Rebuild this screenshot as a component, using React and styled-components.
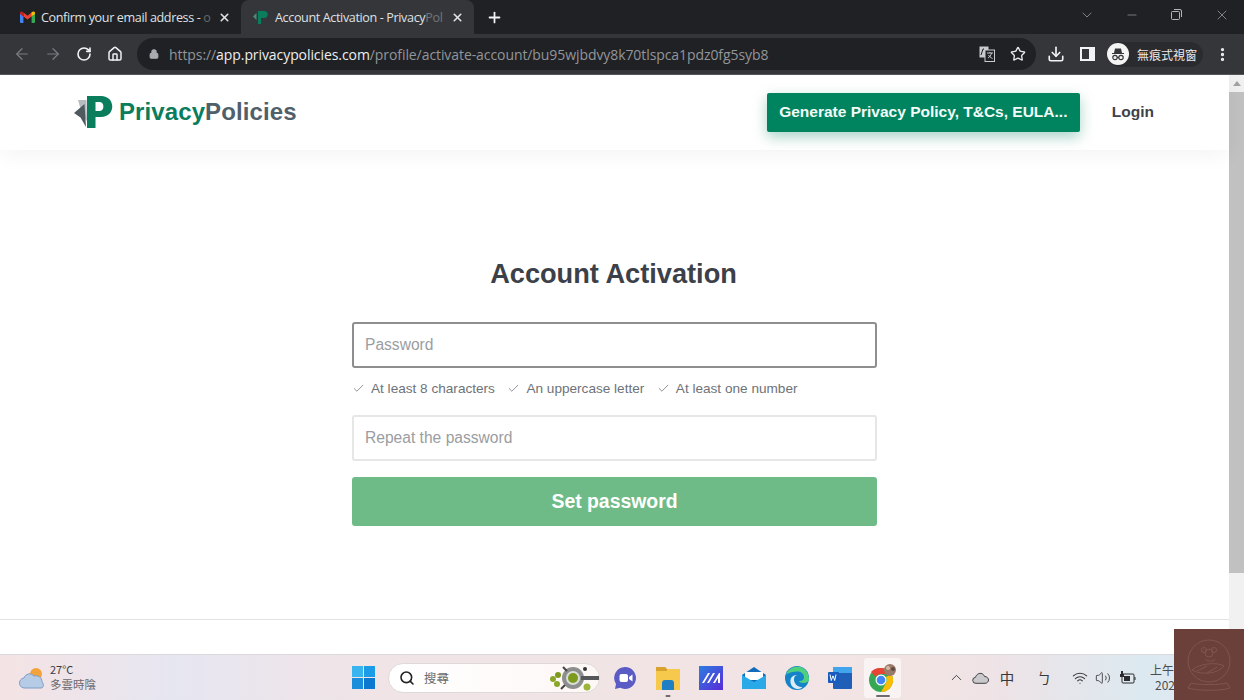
import React from "react";
import styled, { createGlobalStyle } from "styled-components";
import { ArrowLeft, ArrowRight, RotateCw, Home, Lock, Star, Download, ChevronDown, Minus, X, Plus, Check, Search, ChevronUp, Wifi, Volume2, EllipsisVertical } from "lucide-react";

const Global = createGlobalStyle`
  html, body { margin: 0; padding: 0; height: 700px; overflow: hidden; background: #fff; }
  * { box-sizing: border-box; }
  body { font-family: "Liberation Sans", Arial, sans-serif; }
`;
const Screen = styled.div`
  position: relative; width: 1244px; height: 700px; display: flex; flex-direction: column; overflow: hidden;
`;
const TabStrip = styled.div`
  height: 34px; background: #202124; display: flex; align-items: flex-end; padding-left: 8px; flex: none;
`;
const Tab = styled.div`
  width: 233px; height: 34px; display: flex; align-items: center; gap: 6px;
  padding: 0 10px 0 12px; border-radius: 8px 8px 0 0;
  background: ${p => p.$active ? "#35363a" : "transparent"}; color: #dfe1e4;
  font: 12.6px "Open Sans", "Noto Sans", sans-serif; letter-spacing: -0.38px;
`;
const TabTitle = styled.span`
  flex: 1; white-space: nowrap; color: #dfe1e4;
  i { font-style: normal; opacity: .35; }
`;
const NewTab = styled.div`
  width: 40px; height: 33px; display: flex; align-items: center; justify-content: center; color: #f1f3f4;
`;
const WindowControls = styled.div`
  margin-left: auto; height: 34px; display: flex; align-items: center; color: #b4b6b9;
`;
const WinBtn = styled.div`
  width: ${p => p.$w || 45}px; display: flex; justify-content: center; align-items: center; padding-bottom: 5px;
`;
const Toolbar = styled.div`
  height: 41px; flex: none; background: #35363a; display: flex; align-items: center; padding: 0 0 0 6px; border-bottom: 1px solid #55565a;
`;
const NavBtn = styled.div`
  width: 31px; display: flex; justify-content: center; color: ${p => p.$off ? "#7b7d81" : "#f1f3f4"};
`;
const Omnibox = styled.div`
  margin-left: 7px; width: 899px; height: 32px; border-radius: 16px; background: #202124; display: flex; align-items: center; padding: 0 3px 0 12px;
`;
const Url = styled.div`
  margin-left: 10px; flex: 1; font: 14px "Open Sans", "Noto Sans", sans-serif; color: #92959a; white-space: nowrap; letter-spacing: -0.08px;
  b { font-weight: 400; color: #eceef0; }
`;
const OmniIcon = styled.div`
  width: 31px; display: flex; justify-content: center; color: #e8eaed;
`;
const ToolIcon = styled.div`
  width: ${p => p.$w || 31}px; display: flex; justify-content: center; color: #f1f3f4;
`;
const Incognito = styled.div`
  margin-left: 9px; width: 96px; height: 25px; border-radius: 13px; background: #2a2b2e; display: flex; align-items: center; gap: 8px;
  color: #e8eaed; font: 12px "Noto Sans CJK TC", sans-serif; white-space: nowrap;
`;
const Page = styled.div`
  position: relative; height: 579px; flex: none; display: flex; background: #fff; overflow: hidden;
`;
const PageBody = styled.div`
  flex: 1; min-width: 0; display: flex; flex-direction: column;
`;
const Scrollbar = styled.div`
  width: 15px; flex: none; background: #f1f1f1; display: flex; flex-direction: column; align-items: center;
`;
const ScrollArrow = styled.div`
  height: 17px; display: flex; align-items: center; justify-content: center;
  &::before { content: ""; border-left: 4px solid transparent; border-right: 4px solid transparent; border-bottom: 5px solid #a3a3a3; }
`;
const ScrollThumb = styled.div`
  width: 15px; height: 481px; background: #c1c1c1;
`;
const SiteHeader = styled.header`
  height: 75px; flex: none; background: #fff; display: flex; align-items: center; padding: 0 75px 0 74px;
  box-shadow: 0 4px 22px rgba(0,0,0,.05); position: relative;
`;
const Brand = styled.div`
  display: flex; align-items: center; gap: 6px; font: 700 24px "Liberation Sans", sans-serif; color: #0a7d5d; letter-spacing: .1px;
`;
const BrandName = styled.div`
  padding-bottom: 2px;
  span { color: #50606a; }
`;
const Cta = styled.div`
  margin-left: auto; width: 313px; height: 39px; padding-bottom: 1px; background: #00845f; color: #f3fbf8; border-radius: 2px;
  display: flex; align-items: center; justify-content: center; font: 700 15.5px "Liberation Sans", sans-serif; white-space: nowrap;
  box-shadow: 0 5px 14px rgba(0,132,95,.35);
`;
const LoginLink = styled.div`
  margin-left: 32px; padding-bottom: 2px; font: 700 15.5px "Liberation Sans", sans-serif; color: #3f4249;
`;
const Main = styled.main`
  flex: 1; display: flex; flex-direction: column; align-items: center; padding: 107px 0 0 0; border-bottom: 1px solid #e3e3e3;
  margin-bottom: 34px;
`;
const Title = styled.h1`
  margin: 0; font: 700 27.2px/33px "Liberation Sans", sans-serif; color: #3c4049; transform: translateX(-1px);
`;
const Form = styled.div`
  margin-top: 32px; width: 525px; display: flex; flex-direction: column;
`;
const Field = styled.div`
  height: 46px; border: 2px solid ${p => p.$focus ? "#8e8e8e" : "#e6e6e6"}; border-radius: 3px; background: #fff;
  display: flex; align-items: center; padding-left: 11px; color: #9a9da1; font: 15.6px "Liberation Sans", sans-serif;
`;
const Hints = styled.div`
  height: 47px; display: flex; align-items: center; gap: 12.5px; padding-bottom: 7px;
`;
const Hint = styled.div`
  display: flex; align-items: center; gap: 6px; color: #6e7278; font: 13.6px "Liberation Sans", sans-serif; white-space: nowrap;
`;
const Submit = styled.div`
  margin-top: 16px; height: 49px; background: #6fbb87; border-radius: 3px; color: #fff;
  display: flex; align-items: center; justify-content: center; font: 700 19.4px "Liberation Sans", sans-serif;
`;
const Taskbar = styled.div`
  height: 46px; flex: none; display: flex; align-items: center; border-top: 1px solid #dcd9dc;
  background: linear-gradient(90deg, #f4e3e4 0%, #e6e6f1 14%, #f0e4e6 30%, #f3e4e4 74%, #eee3e6 80%, #dce9f0 92%, #e4e6f0 100%);
`;
const Weather = styled.div`
  width: 352px; flex: none; display: flex; align-items: center; gap: 5px; padding-left: 19px;
`;
const WeatherText = styled.div`
  display: flex; flex-direction: column; padding-bottom: 2px; font: 11px/15px "Noto Sans CJK TC", sans-serif; color: #3b3b3d;
  small { font-size: 11.5px; color: #6a6a70; }
`;
const SearchBox = styled.div`
  width: 212px; height: 30px; margin-left: 13px; flex: none; border-radius: 15px; background: linear-gradient(90deg,#fff 0%,#fdf7f5 100%);
  border: 1px solid #dedadb; display: flex; align-items: center; padding-left: 10px; gap: 9px;
  color: #6b6b6b; font: 12.5px "Noto Sans CJK TC", sans-serif; position: relative;
`;
const SearchArtSvg = styled.svg`
  position: absolute; right: -2px; top: -1px;
`;
const Dock = styled.div`
  display: flex; align-items: center; margin-left: 3px;
`;
const DockItem = styled.div`
  width: 43px; height: 40px; display: flex; justify-content: center; align-items: center; position: relative;
  &::before { content: ""; display: ${p => p.$on ? "block" : "none"}; position: absolute; inset: 0 3px; background: rgba(255,255,255,.55); border-radius: 3px; }
  > svg { position: relative; }
  &::after { content: ""; display: ${p => p.$dot ? "block" : "none"}; position: absolute; bottom: 1px; left: 50%; transform: translateX(-50%);
    width: ${p => p.$on ? 14 : 5}px; height: 2px; border-radius: 1px; background: #6f6b6c; }
`;
const Tray = styled.div`
  margin-left: 40px; display: flex; align-items: center; color: #38383a; font: 14.5px "Noto Sans CJK TC", sans-serif; flex: none;
`;
const TrayItem = styled.div`
  width: ${p => p.$w || 24}px; display: flex; justify-content: center;
`;
const Clock = styled.div`
  margin-left: 8px; padding-bottom: 1px; font: 12px/15px "Noto Sans CJK TC", sans-serif; color: #4c4c50; white-space: nowrap;
  span { display: block; padding-left: 5px; }
`;
const Watermark = styled.div`
  position: absolute; right: 0; top: 629px; width: 70px; height: 71px; background: #6b3f3a; display: flex; align-items: center; justify-content: center;
`;

const Gmail = () => (
  <svg width="15" height="12" viewBox="0 0 15 12"><path d="M0 2v9a1 1 0 0 0 1 1h2.4V5.4z" fill="#4285f4"/><path d="M15 2v9a1 1 0 0 1-1 1h-2.4V5.4z" fill="#34a853"/><path d="M3.4 5.4 7.5 8.5l4.1-3.1V1.6L7.5 4.7 3.4 1.6z" fill="#ea4335"/><path d="M0 2c0-1.6 1.9-2.4 3.4-.4v3.8L0 3z" fill="#c5221f"/><path d="M15 2c0-1.6-1.9-2.4-3.6-.4v3.8L15 3z" fill="#fbbc04"/></svg>
);
const MiniP = () => (
  <svg width="16" height="15" viewBox="0 0 16 15"><path d="M5 1h6c5 0 5 7 0 7H8v6H5z" fill="#0a7d5d"/><path d="M3.5 3 0 6.5 3.5 10z" fill="#4d8a78"/></svg>
);
const Logo = () => (
  <svg width="39" height="33" viewBox="0 0 39 33">
    <path d="M4 4h8.500l.5 21-4.500-5z" fill="#b6bcc0"/>
    <path d="M0 17 10.500 8l1.500 23-5.500-9.500z" fill="#4f5a60"/>
    <path fillRule="evenodd" d="M13 0h14c15 0 15 21 0 21h-5.500v11H13zM21.500 6v9H26c4.500 0 4.500-9 0-9z" fill="#0a7d5d"/>
  </svg>
);
const Translate = () => (
  <svg width="16" height="16" viewBox="0 0 16 16"><rect x="0.500" y="0.500" width="9" height="11" fill="#c8cacc"/><rect x="6" y="4" width="9.500" height="11.500" fill="#202124" stroke="#c8cacc"/><path d="M8 7h6M11 6v1M9 12c2-1 3-3 3.500-5M9.500 9c1 1.500 2 2.500 4 3.500" stroke="#c8cacc" fill="none"/><path d="M2 9l2-6h1" stroke="#202124" fill="none"/></svg>
);
const SidePanel = () => (
  <svg width="15" height="14" viewBox="0 0 15 14"><path fillRule="evenodd" d="M0 0h15v14H0zM2 2v10h7V2z" fill="#f1f3f4"/></svg>
);
const IncognitoIcon = () => (
  <svg width="22" height="22" viewBox="0 0 22 22"><circle cx="11" cy="11" r="11" fill="#f4f4f4"/><path d="M5 10h12v1H5zM7 10l1-4.500h6l1 4.500z" fill="#35363a"/><circle cx="8" cy="14.500" r="2.200" fill="none" stroke="#35363a" strokeWidth="1.200"/><circle cx="14" cy="14.500" r="2.200" fill="none" stroke="#35363a" strokeWidth="1.200"/><path d="M10 14.500h2" stroke="#35363a"/></svg>
);
const WeatherIcon = () => (
  <svg width="26" height="22" viewBox="0 0 26 22"><circle cx="17" cy="7" r="6" fill="#f2a33c"/><path d="M6 21a5 5 0 0 1-1-10c1-4 7-6 10-2 4-1 8 1 8 6 2 1 2 6-1 6z" fill="#b6cbe6" stroke="#7d9cc4"/></svg>
);
const WinLogo = () => (
  <svg width="23" height="23" viewBox="0 0 23 23"><rect width="11" height="11" fill="#38b5ee"/><rect x="12" width="11" height="11" fill="#1c9be6"/><rect y="12" width="11" height="11" fill="#1a8ddb"/><rect x="12" y="12" width="11" height="11" fill="#0d78cf"/></svg>
);
const SearchArt = () => (
  <SearchArtSvg width="52" height="30" viewBox="0 0 52 30">
    <circle cx="24" cy="15" r="11" fill="#8d8f8f"/><circle cx="24" cy="15" r="7" fill="#dcdcd8"/><circle cx="24" cy="15" r="5" fill="#7c9a1e"/>
    <path d="M32 13h18v4H32z" fill="#55575a"/><circle cx="4" cy="16" r="3" fill="#8aa52a"/><circle cx="9" cy="12" r="3" fill="#7c9a1e"/><circle cx="8" cy="21" r="3" fill="#8aa52a"/><circle cx="38" cy="24" r="3.500" fill="#9bb53a"/><circle cx="36" cy="6" r="2" fill="#333"/><path d="M12 26l4-4M14 4l4 4" stroke="#444" strokeWidth="2"/>
  </SearchArtSvg>
);
const Meet = () => (
  <svg width="24" height="24" viewBox="0 0 24 24"><path d="M12 1a11 11 0 1 1-5 20.800L2 23l1-5A11 11 0 0 1 12 1z" fill="#5b5bc6"/><rect x="6.500" y="8" width="8.500" height="8" rx="2" fill="#fff"/><path d="M16 11l3.500-2.500v7L16 13z" fill="#fff"/></svg>
);
const Folder = () => (
  <svg width="24" height="24" viewBox="0 0 24 24"><path d="M0 1h9l2 2h13v21H0z" fill="#f6c94c"/><path d="M0 1h9l2 2v2H0z" fill="#d9a22e"/><path d="M6 17q0-3 3-3h6q3 0 3 3v7H6z" fill="#1f7fc4"/></svg>
);
const MaIcon = () => (
  <svg width="24" height="24" viewBox="0 0 24 24"><defs><linearGradient id="ma" x1="0" y1="0" x2="1" y2="1"><stop offset="0" stopColor="#2c7de0"/><stop offset="1" stopColor="#5a2bd8"/></linearGradient></defs><rect width="24" height="24" fill="url(#ma)"/><path d="M3 17 9 7h2l-6 10zM8 17l6-10h2l-6 10zM14 17l6-10h1v10h-2v-5l-3 5z" fill="#fff"/></svg>
);
const Mail = () => (
  <svg width="24" height="22" viewBox="0 0 24 22"><path d="M12 0 24 8v14H0V8z" fill="#0f6cbd"/><rect x="3" y="5" width="18" height="8" fill="#fff"/><path d="M0 8l12 7 12-7v14H0z" fill="#29a9e8"/></svg>
);
const Edge = () => (
  <svg width="24" height="24" viewBox="0 0 24 24"><circle cx="12" cy="12" r="12" fill="#1583c8"/><path d="M1 9C3 2 10 0 15 1c5 1 9 6 9 12 0 3-3 4-6 4-2 0-4-1-4-2 3 0 5-1 5-4 0-4-4-6-8-5.500C7 6 2 7 1 9z" fill="#4fd07f"/><path d="M12 23c-5-1-7-5-6.500-9C6 10 10 9 12 9c-3 1-3.500 4-2.500 7s4 5 8 5c-2 2-4 2-5.500 2z" fill="#fff" opacity=".85"/></svg>
);
const Word = () => (
  <svg width="24" height="22" viewBox="0 0 24 22"><rect x="5" y="0" width="19" height="22" rx="1" fill="#1f5fb8"/><rect x="5" y="0" width="19" height="6" fill="#41a5ee"/><rect x="0" y="5" width="11" height="11" rx="1" fill="#185abd"/><path d="M2 7.500l1.300 6 1.500-4.500h.4l1.500 4.500 1.300-6" stroke="#fff" fill="none"/></svg>
);
const Chrome = () => (
  <svg width="28" height="30" viewBox="0 0 28 30"><g transform="translate(0 5)"><circle cx="12" cy="12" r="12" fill="#34a853"/><path d="M12 0a12 12 0 0 1 10.400 6H12a6 6 0 0 0-5.200 3L2 4A12 12 0 0 1 12 0z" fill="#ea4335"/><path d="M22.400 6A12 12 0 0 1 12 24l5-9a6 6 0 0 0 0-6z" fill="#fbbc04"/><circle cx="12" cy="12" r="5.500" fill="#fff"/><circle cx="12" cy="12" r="4.300" fill="#4285f4"/></g><circle cx="21" cy="7" r="6" fill="#9a7a6a"/><circle cx="19" cy="5" r="2" fill="#d8b9a0"/><circle cx="24" cy="6" r="2" fill="#5b4a40"/></svg>
);
const OneDrive = () => (
  <svg width="17" height="12" viewBox="0 0 17 12"><path d="M4 11.300a3 3 0 0 1-.5-6C4.500 2 7.500.700 10 1.700c1.500.6 2 1.600 2.500 2.800 2.500 0 4 1.700 4 3.500s-1.500 3.300-3.500 3.300z" fill="#c9c9cc" stroke="#404043"/></svg>
);
const Battery = () => (
  <svg width="17" height="14" viewBox="0 0 17 14"><rect x="3" y="3" width="12" height="9" rx="1" fill="none" stroke="#2c2c2e"/><rect x="5" y="5" width="6" height="5" fill="#2c2c2e"/><path d="M15.500 6h1v3h-1zM2 0h2v4H2zM1 3h4v3H1z" fill="#2c2c2e"/></svg>
);
const Badge = () => (
  <svg width="52" height="56" viewBox="0 0 52 56" fill="none" stroke="#81554e" strokeWidth="1"><circle cx="26" cy="24" r="21"/><path d="M8 46c6 2 30 2 36 0l3 5c-8 3-34 3-42 0z"/><circle cx="26" cy="16" r="4"/><circle cx="21" cy="13" r="2.500"/><circle cx="31" cy="13" r="2.500"/><path d="M9 33c8-7 26-8 32-4-5 7-21 10-32 4zM22 22c4 3 8 3 10 0M14 34l10-5M24 36l10-6"/></svg>
);

export default function App() {
  return (
    <Screen>
      <Global />
      <TabStrip>
        <Tab><Gmail /><TabTitle>Confirm your email address - <i>o</i></TabTitle><X size={13} strokeWidth={3} /></Tab>
        <Tab $active><MiniP /><TabTitle>Account Activation - Privacy<i>Pol</i></TabTitle><X size={13} strokeWidth={3} /></Tab>
        <NewTab><Plus size={17} strokeWidth={2.5} /></NewTab>
        <WindowControls>
          <WinBtn $w={44}><ChevronDown size={16} strokeWidth={1} /></WinBtn>
          <WinBtn><Minus size={14} strokeWidth={1} /></WinBtn>
          <WinBtn>
            <svg width="11" height="11" viewBox="0 0 11 11" fill="none" stroke="currentColor"><rect x="0.500" y="2.500" width="8" height="8" rx="1"/><path d="M3 .5h6a1.500 1.500 0 0 1 1.500 1.500v6"/></svg>
          </WinBtn>
          <WinBtn><X size={16} strokeWidth={1} /></WinBtn>
        </WindowControls>
      </TabStrip>
      <Toolbar>
        <NavBtn $off><ArrowLeft size={18} strokeWidth={1.6} /></NavBtn>
        <NavBtn $off><ArrowRight size={18} strokeWidth={1.6} /></NavBtn>
        <NavBtn><RotateCw size={16} strokeWidth={2.4} /></NavBtn>
        <NavBtn><Home size={16} strokeWidth={2.2} /></NavBtn>
        <Omnibox>
          <Lock size={10} strokeWidth={3} color="#a8abaf" fill="#a8abaf" />
          <Url>https://<b>app.privacypolicies.com</b>/profile/activate-account/bu95wjbdvy8k70tlspca1pdz0fg5syb8</Url>
          <OmniIcon><Translate /></OmniIcon>
          <OmniIcon><Star size={16} strokeWidth={2} /></OmniIcon>
        </Omnibox>
        <ToolIcon $w={40}><Download size={18} strokeWidth={2.2} /></ToolIcon>
        <ToolIcon $w={22}><SidePanel /></ToolIcon>
        <Incognito><IncognitoIcon />無痕式視窗</Incognito>
        <ToolIcon $w={38}><EllipsisVertical size={17} strokeWidth={2.6} /></ToolIcon>
      </Toolbar>
      <Page>
        <PageBody>
          <SiteHeader>
            <Brand><Logo /><BrandName>Privacy<span>Policies</span></BrandName></Brand>
            <Cta>Generate Privacy Policy, T&amp;Cs, EULA...</Cta>
            <LoginLink>Login</LoginLink>
          </SiteHeader>
          <Main>
            <Title>Account Activation</Title>
            <Form>
              <Field $focus>Password</Field>
              <Hints>
                <Hint><Check size={13} strokeWidth={1.4} />At least 8 characters</Hint>
                <Hint><Check size={13} strokeWidth={1.4} />An uppercase letter</Hint>
                <Hint><Check size={13} strokeWidth={1.4} />At least one number</Hint>
              </Hints>
              <Field>Repeat the password</Field>
              <Submit>Set password</Submit>
            </Form>
          </Main>
        </PageBody>
        <Scrollbar><ScrollArrow /><ScrollThumb /></Scrollbar>
      </Page>
      <Taskbar>
        <Weather>
          <WeatherIcon />
          <WeatherText><span>27°C</span><small>多雲時陰</small></WeatherText>
        </Weather>
        <WinLogo />
        <SearchBox><Search size={16} strokeWidth={2.4} color="#222" />搜尋<SearchArt /></SearchBox>
        <Dock>
          <DockItem><Meet /></DockItem>
          <DockItem $dot><Folder /></DockItem>
          <DockItem><MaIcon /></DockItem>
          <DockItem><Mail /></DockItem>
          <DockItem><Edge /></DockItem>
          <DockItem><Word /></DockItem>
          <DockItem $dot $on><Chrome /></DockItem>
        </Dock>
        <Tray>
          <TrayItem><ChevronUp size={17} strokeWidth={1.3} /></TrayItem>
          <TrayItem><OneDrive /></TrayItem>
          <TrayItem $w={30}>中</TrayItem>
          <TrayItem $w={44}>ㄅ</TrayItem>
          <TrayItem $w={28}><Wifi size={16} strokeWidth={1.6} /></TrayItem>
          <TrayItem $w={18}><Volume2 size={16} strokeWidth={1.3} /></TrayItem>
          <TrayItem $w={30}><Battery /></TrayItem>
          <Clock>上午<span>2023</span></Clock>
        </Tray>
      </Taskbar>
      <Watermark><Badge /></Watermark>
    </Screen>
  );
}
